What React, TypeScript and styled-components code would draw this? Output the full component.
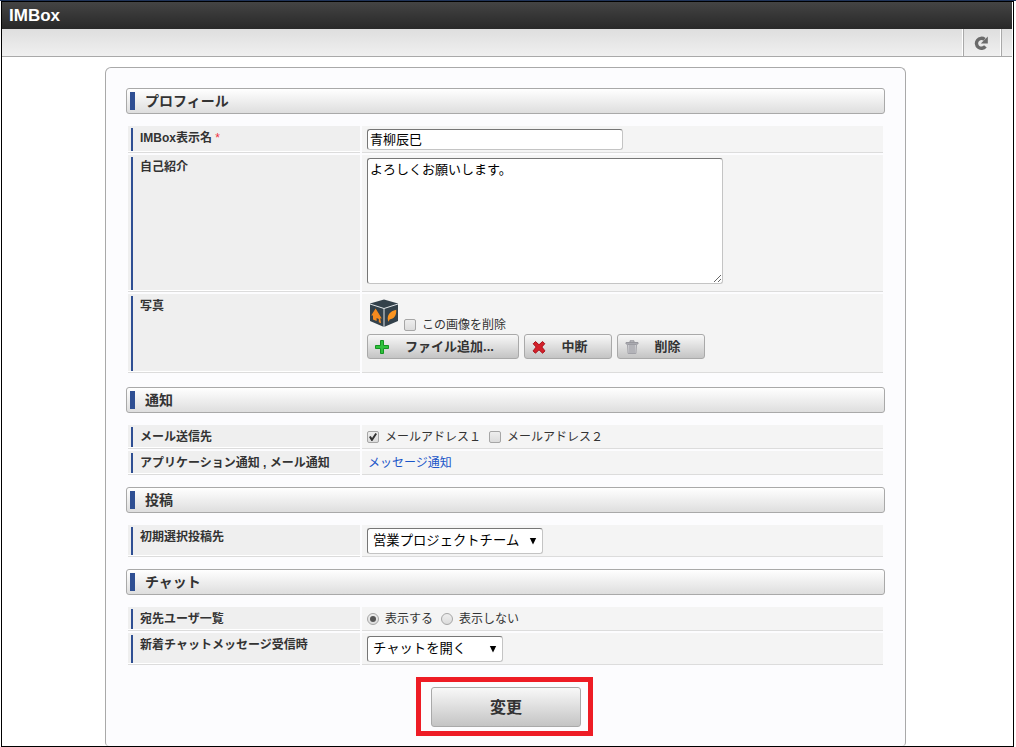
import React from "react";
import styled, { createGlobalStyle } from "styled-components";

const GlobalStyle = createGlobalStyle`
  *, *::before, *::after { box-sizing: border-box; }
  body {
    margin: 0;
    border-top: 1px solid #1f3358;
    background: #fff;
    color: #333;
    font: 12px/18px "Liberation Sans", "Noto Sans CJK JP", sans-serif;
  }
`;

const Frame = styled.div`
  display: flex;
  flex-direction: column;
  min-height: calc(100vh - 1px);
  margin: 0 2px 0 1px;
  padding-right: 1px;
  border: 1px solid #000;
`;

const Header = styled.header`
  padding: 0 7px;
  background: linear-gradient(#444, #282828);
`;

const Title = styled.h1`
  margin: 0;
  color: #fff;
  font-size: 17px;
  line-height: 27px;
`;

const Toolbar = styled.div`
  display: flex;
  justify-content: flex-end;
  height: 28px;
  padding-right: 10px;
  border-bottom: 1px solid #a9a9a9;
  background: linear-gradient(#dedede, #f0f0f0);
`;

const ToolButton = styled.button`
  display: flex;
  align-items: center;
  justify-content: center;
  width: 40px;
  padding: 0 2px 0 0;
  border: 0;
  border-left: 1px solid #fff;
  border-right: 1px solid #a9a9a9;
  background: none;
  box-shadow: inset 1px 0 #a9a9a9, inset -1px 0 #fff;
`;

const Main = styled.main`
  flex: 1;
  display: flex;
  justify-content: center;
  padding: 10px 3px 0 0;
`;

const Card = styled.form`
  width: 100%;
  max-width: 801px;
  padding: 20px 20px 10px;
  border: 1px solid #a9a9a9;
  border-bottom: 0;
  border-radius: 6px 6px 4px 4px;
  background: #fcfcfe;
`;

const Section = styled.section<{ $gap?: number }>`
  margin-bottom: ${(p) => p.$gap ?? 10}px;
`;

const SectionTitle = styled.h2`
  display: flex;
  align-items: center;
  gap: 10px;
  height: 26px;
  margin: 0 0 10px;
  padding-left: 3px;
  border: 1px solid #a9a9a9;
  border-radius: 3px;
  background: linear-gradient(#fff, #dedede);
  font-size: 14px;
  line-height: 24px;

  &::before {
    content: "";
    width: 5px;
    height: 18px;
    background: #2f4f93;
  }
`;

const Table = styled.table`
  width: 100%;
  border-spacing: 2px;
  table-layout: fixed;

  th, td {
    border-bottom: 1px solid #dcdcdc;
    vertical-align: top;
    text-align: left;
  }
  th {
    width: 232px;
    padding: 3px 0 2px 12px;
    background: linear-gradient(#2f4f93, #2f4f93) 3px 2px / 2px calc(100% - 3px) no-repeat, #efefef;
    box-shadow: inset 0 -1px #fff;
  }
  td {
    padding: 3px 5px 2px;
    background: #f4f4f4;
  }
`;

const Required = styled.span`
  color: #f03040;
  font-weight: normal;
`;

const fieldBorder = `
  border: 1px solid #c4c4c4;
  border-top-color: #767676;
  border-left-color: #767676;
  border-radius: 3px;
  background: #fff;
  color: #000;
  font-family: inherit;
`;

const TextField = styled.input`
  ${fieldBorder}
  display: block;
  width: 256px;
  height: 21px;
  padding: 0 2px 2px;
  font-size: 13px;
`;

const TextArea = styled.textarea`
  ${fieldBorder}
  display: block;
  width: 356px;
  height: 126px;
  margin-bottom: 5px;
  padding: 2px;
  font-size: 13px;
  line-height: 17px;
`;

const SelectBox = styled.div<{ $width: number }>`
  position: relative;
  width: ${(p) => p.$width}px;

  select {
    ${fieldBorder}
    appearance: none;
    display: block;
    width: 100%;
    height: 26px;
    padding: 0 5px 2px;
  }
  svg {
    position: absolute;
    top: 10px;
    right: 6px;
    pointer-events: none;
  }
`;

const PhotoRow = styled.div`
  display: flex;
  align-items: flex-end;
  gap: 5px;
  height: 37px;
  padding-left: 2px;

  > svg { margin-bottom: 6px; }
`;

const Options = styled.div`
  display: flex;
  gap: 8px;
`;

const Option = styled.label`
  display: flex;
  align-items: center;
  gap: 6px;
`;

const Check = styled.input<{ $round?: boolean }>`
  appearance: none;
  display: grid;
  place-items: center;
  width: 12px;
  height: 12px;
  margin: 0;
  border: 1px solid #a6a6a6;
  border-radius: ${(p) => (p.$round ? "50%" : "2px")};
  background: linear-gradient(#eee, #dcdcdc);

  &:checked::before {
    content: "";
    ${(p) =>
      p.$round
        ? "width: 6px; height: 6px; border-radius: 50%; background: #555;"
        : "width: 8px; height: 8px; background: #333; clip-path: polygon(0 50%, 22% 38%, 38% 62%, 80% 0, 100% 14%, 42% 100%, 30% 100%);"}
  }
`;

const Buttons = styled.div`
  display: flex;
  gap: 5px;
  margin-bottom: 11px;
`;

const buttonFace = `
  border: 1px solid #a9a9a9;
  border-radius: 3px;
  background: linear-gradient(#f8f8f8, #c4c4c4);
  color: #333;
  font-family: inherit;
  font-weight: bold;
`;

const IconButton = styled.button<{ $wide?: boolean }>`
  ${buttonFace}
  display: flex;
  align-items: center;
  width: ${(p) => (p.$wide ? 152 : 88)}px;
  height: 25px;
  padding: 0 9px 0 6px;
  font-size: 13px;
  line-height: 23px;
  white-space: nowrap;

  span { flex: 1; text-align: center; }
`;

const Link = styled.a`
  padding-left: 1px;
  color: #1a55c8;
  text-decoration: none;
`;

const Footer = styled.div`
  display: flex;
  justify-content: center;
  padding-right: 2px;
`;

const Highlight = styled.div`
  padding: 5px 7px 4px 10px;
  border: 5px solid #ee1c25;
`;

const SubmitButton = styled.button`
  ${buttonFace}
  display: block;
  width: 150px;
  height: 40px;
  padding: 0 0 2px;
  font-size: 16px;
`;

const RefreshIcon = () => (
  <svg width="14" height="14" viewBox="0 0 14 14" aria-hidden="true">
    <path d="M11.400 10.400A5 5 0 1 1 10.600 3.400" fill="none" stroke="#6a6a6a" strokeWidth="3.400" />
    <path d="M13.800 .6v6.800H6.800z" fill="#6a6a6a" />
  </svg>
);

const Arrow = () => (
  <svg width="8" height="7" viewBox="0 0 8 7" aria-hidden="true">
    <path d="M.8 0h6.4L4 6.5z" fill="#000" />
  </svg>
);

const CubeIcon = () => (
  <svg width="30" height="29" viewBox="0 0 30 29" aria-hidden="true">
    <path d="M15 .5 29 4.500V22L15 28 1 22V4.500z" fill="#33414b" />
    <path d="M1 5 15 9.500 29 5M15 9.500V28" fill="none" stroke="#dfe4e7" strokeWidth="1" />
    <path d="M2.200 16.500 6.600 9.500l6.200 10-1.600-.2.900 5-2.300-1v-3.400l-2.200-.8v3l-3.600-1.600v-4z" fill="#f58a1f" />
    <path d="M19 21.500c-1.200-5 1.800-9.200 8.200-10.700.5 5.600-2.200 9.400-6.600 9.600l-1 2.400z" fill="#fb9420" />
  </svg>
);

const PlusIcon = () => (
  <svg width="16" height="16" viewBox="0 0 16 16" aria-hidden="true">
    <path d="M6.500 1.500h3v5h5v3h-5v5h-3v-5h-5v-3h5z" fill="#2fc23c" stroke="#159322" strokeLinejoin="round" />
  </svg>
);

const CrossIcon = () => (
  <svg width="16" height="16" viewBox="0 0 16 16" aria-hidden="true">
    <path d="M4.500 2.500 8 5.800l3.500-3.300 2.300 2.200L10.800 8l3.200 3.900-2.400 2.300L8 10.800l-3.600 3.400-2.300-2.300L5.200 8 2.200 4.800z" fill="#d3202a" stroke="#a80f18" strokeLinejoin="round" />
  </svg>
);

const TrashIcon = () => (
  <svg width="16" height="16" viewBox="0 0 16 16" aria-hidden="true">
    <path d="M3.500 5.500h9l-.6 9H4.100z" fill="#cfcfd3" stroke="#a2a2a8" />
    <path d="M6 6v8M8 6v8M10 6v8" stroke="#97979d" />
    <path d="M2 3.500h12v1.500H2zM6 3V1.800h4V3" fill="#bcbcc1" stroke="#98989e" />
  </svg>
);

export default function App() {
  return (
    <>
      <GlobalStyle />
      <Frame>
        <Header>
          <Title>IMBox</Title>
        </Header>
        <Toolbar>
          <ToolButton type="button" aria-label="更新">
            <RefreshIcon />
          </ToolButton>
        </Toolbar>
        <Main>
          <Card onSubmit={(e) => e.preventDefault()}>
            <Section $gap={12}>
              <SectionTitle>プロフィール</SectionTitle>
              <Table>
                <tbody>
                  <tr>
                    <th scope="row">
                      <label htmlFor="name">IMBox表示名</label> <Required>*</Required>
                    </th>
                    <td><TextField id="name" defaultValue="青柳辰巳" /></td>
                  </tr>
                  <tr>
                    <th scope="row"><label htmlFor="intro">自己紹介</label></th>
                    <td><TextArea id="intro" defaultValue="よろしくお願いします。" /></td>
                  </tr>
                  <tr>
                    <th scope="row">写真</th>
                    <td>
                      <PhotoRow>
                        <CubeIcon />
                        <Option><Check type="checkbox" />この画像を削除</Option>
                      </PhotoRow>
                      <Buttons>
                        <IconButton type="button" $wide><PlusIcon /><span>ファイル追加...</span></IconButton>
                        <IconButton type="button"><CrossIcon /><span>中断</span></IconButton>
                        <IconButton type="button"><TrashIcon /><span>削除</span></IconButton>
                      </Buttons>
                    </td>
                  </tr>
                </tbody>
              </Table>
            </Section>

            <Section>
              <SectionTitle>通知</SectionTitle>
              <Table>
                <tbody>
                  <tr>
                    <th scope="row">メール送信先</th>
                    <td>
                      <Options>
                        <Option><Check type="checkbox" defaultChecked />メールアドレス１</Option>
                        <Option><Check type="checkbox" />メールアドレス２</Option>
                      </Options>
                    </td>
                  </tr>
                  <tr>
                    <th scope="row">アプリケーション通知 , メール通知</th>
                    <td><Link href="#message">メッセージ通知</Link></td>
                  </tr>
                </tbody>
              </Table>
            </Section>

            <Section>
              <SectionTitle>投稿</SectionTitle>
              <Table>
                <tbody>
                  <tr>
                    <th scope="row"><label htmlFor="target">初期選択投稿先</label></th>
                    <td>
                      <SelectBox $width={176}>
                        <select id="target"><option>営業プロジェクトチーム</option></select>
                        <Arrow />
                      </SelectBox>
                    </td>
                  </tr>
                </tbody>
              </Table>
            </Section>

            <Section>
              <SectionTitle>チャット</SectionTitle>
              <Table>
                <tbody>
                  <tr>
                    <th scope="row">宛先ユーザ一覧</th>
                    <td>
                      <Options>
                        <Option><Check type="radio" name="users" $round defaultChecked />表示する</Option>
                        <Option><Check type="radio" name="users" $round />表示しない</Option>
                      </Options>
                    </td>
                  </tr>
                  <tr>
                    <th scope="row"><label htmlFor="receive">新着チャットメッセージ受信時</label></th>
                    <td>
                      <SelectBox $width={136}>
                        <select id="receive"><option>チャットを開く</option></select>
                        <Arrow />
                      </SelectBox>
                    </td>
                  </tr>
                </tbody>
              </Table>
            </Section>

            <Footer>
              <Highlight>
                <SubmitButton type="submit">変更</SubmitButton>
              </Highlight>
            </Footer>
          </Card>
        </Main>
      </Frame>
    </>
  );
}
